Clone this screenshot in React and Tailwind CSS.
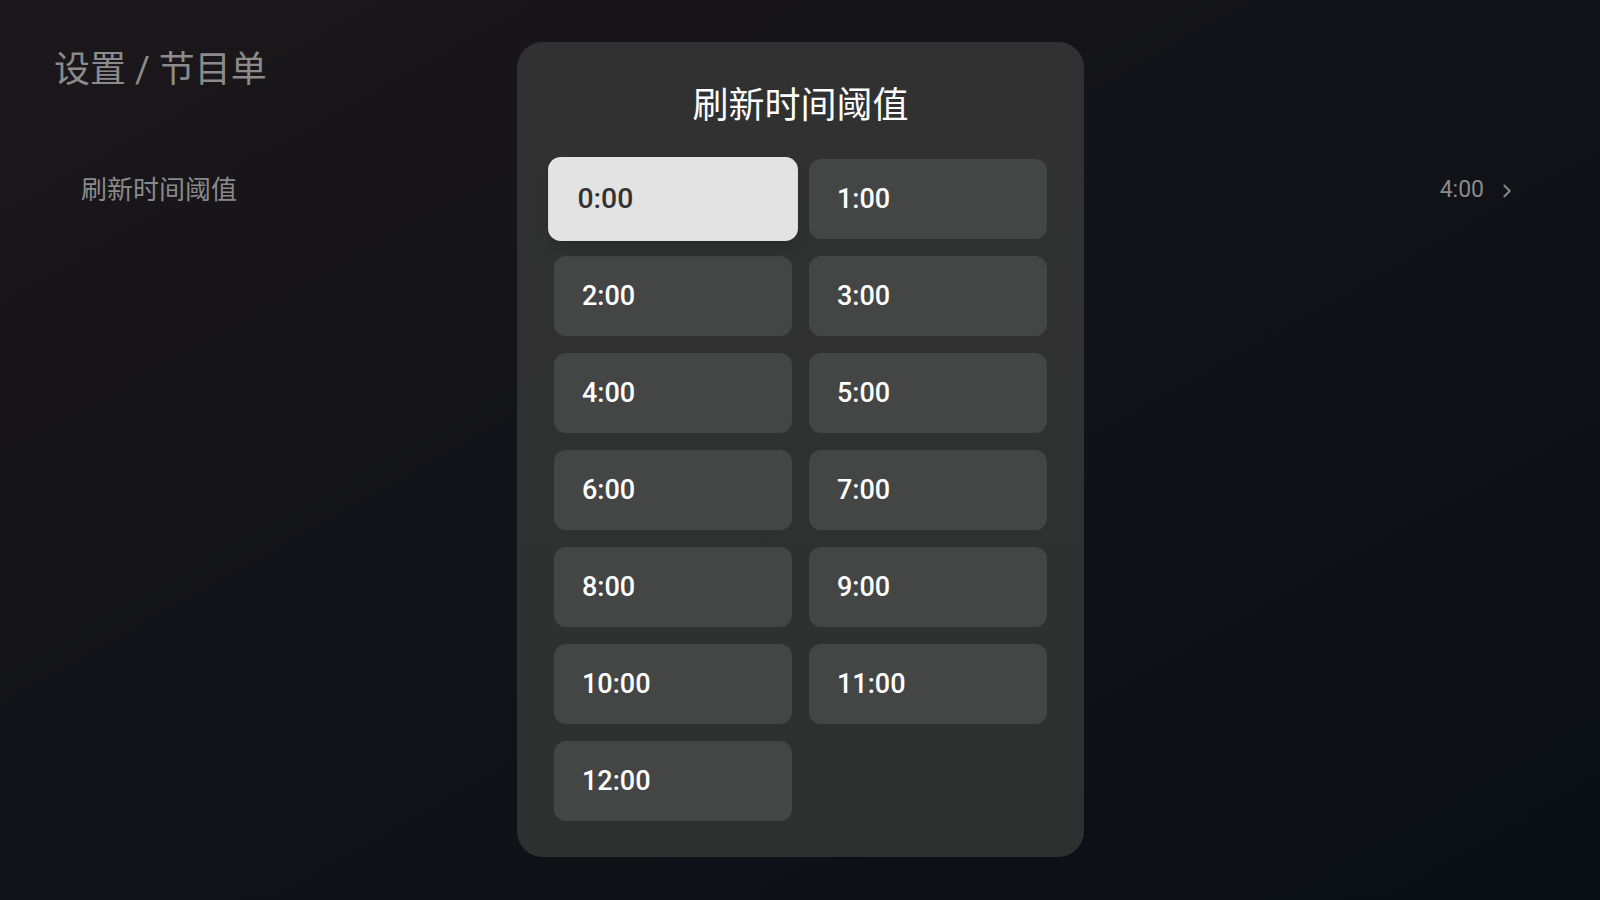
import React from "react";
import { ChevronRight } from "lucide-react";

const hours = Array.from({ length: 13 }, (_, i) => `${i}:00`);

function TimeOption({ label, selected }) {
  if (selected) {
    return (
      <div className="h-20 rounded-[12px] bg-[#e3e3e3] flex items-center pl-[28px] scale-[1.05] shadow-lg">
        <span className="text-[27px] font-medium text-[#333333]">{label}</span>
      </div>
    );
  }
  return (
    <div className="h-20 rounded-[12px] bg-[#444545] flex items-center pl-[28px]">
      <span className="text-[27px] font-medium text-white">{label}</span>
    </div>
  );
}

function ThresholdDialog({ value }) {
  return (
    <div className="absolute inset-0 flex justify-center pt-[42px] pl-[1px]">
      <div className="w-[567px] h-[815px] rounded-[26px] bg-gradient-to-b from-[#313131] to-[#2e302f] px-[37px]">
        <h3 className="h-[117px] flex items-center justify-center text-[36px] text-white pt-[10px]">
          刷新时间阈值
        </h3>
        <div className="grid grid-cols-2 gap-[17px]">
          {hours.map((h) => (
            <TimeOption key={h} label={h} selected={h === value} />
          ))}
        </div>
      </div>
    </div>
  );
}

export default function App() {
  return (
    <div
      className="relative w-[1600px] h-[900px] overflow-hidden bg-gradient-to-br from-[#1c171b] via-[#111318] to-[#0a0e15]"
      style={{ fontFamily: "Roboto, 'Noto Sans CJK SC', sans-serif" }}
    >
      <div className="pl-[54px] pt-[46px]">
        <h1 className="text-[36px] text-[#8b8b8b] leading-[48px]">设置 / 节目单</h1>
        <div className="flex items-center justify-between mt-[77px] pl-[27px] pr-[82px]">
          <span className="text-[26px] text-[#8a8a8a]">刷新时间阈值</span>
          <div className="flex items-center gap-[12px] text-[#8a8a8a]">
            <span className="text-[23px]">4:00</span>
            <ChevronRight size={22} strokeWidth={2} />
          </div>
        </div>
      </div>
      <ThresholdDialog value="0:00" />
    </div>
  );
}
